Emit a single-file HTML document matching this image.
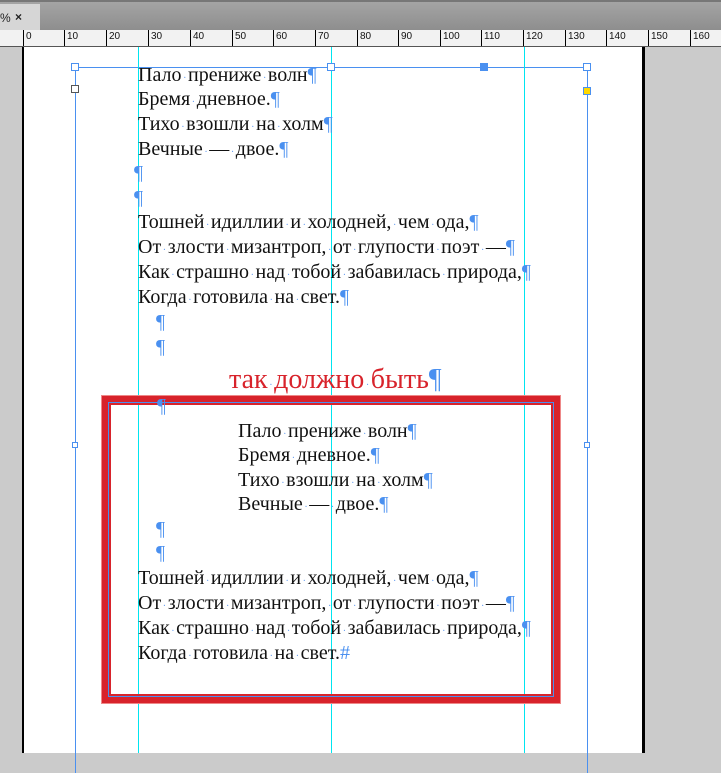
<!DOCTYPE html>
<html><head><meta charset="utf-8"><style>
html,body{margin:0;padding:0}
body{width:721px;height:753px;position:relative;overflow:hidden;background:#cbcbcb;font-family:"Liberation Serif","Noto Serif CJK SC",serif}
.top{position:absolute;left:0;top:0;width:721px;height:30px;background:linear-gradient(#a4a4a4,#8e8e8e);border-top:2px solid #777;box-sizing:border-box}
.tab{position:absolute;left:0;top:2px;width:40px;height:28px;background:#d6d6d6;font:12px "Liberation Sans",sans-serif;color:#222}
.ruler{position:absolute;left:0;top:30px;width:721px;height:16px;background:#f2f2f2;border-bottom:1px solid #555;font:10px "Liberation Sans",sans-serif;color:#111}
.ruler .t{position:absolute;top:0;height:16px;border-left:1px solid #000}
.ruler .t span{position:absolute;left:2px;top:1px}
.page{position:absolute;left:22px;top:47px;width:618px;height:706px;background:#fff;border-left:2px solid #000;border-right:3px solid #000}
.v{position:absolute;top:47px;width:1px;height:706px}
.l{position:absolute;font-size:20px;line-height:20px;color:#111;white-space:nowrap}
.p{color:#4a90f0}
i{font-style:normal;display:inline-block;width:6.5px;text-align:center;color:#6aa0f0;font-size:10px}
.h{position:absolute;width:6px;height:6px;border:1px solid #4a90f0;background:#fff}
</style></head><body>
<div class="top"><div class="tab"><span style="position:absolute;left:0;top:7px">%</span><span style="position:absolute;left:15px;top:6px;font-weight:bold">×</span></div></div>
<div class="ruler">
<div class="t" style="left:23px"><span>0</span></div><div class="t" style="left:64px"><span>10</span></div><div class="t" style="left:106px"><span>20</span></div><div class="t" style="left:148px"><span>30</span></div><div class="t" style="left:190px"><span>40</span></div><div class="t" style="left:232px"><span>50</span></div><div class="t" style="left:273px"><span>60</span></div><div class="t" style="left:315px"><span>70</span></div><div class="t" style="left:357px"><span>80</span></div><div class="t" style="left:398px"><span>90</span></div><div class="t" style="left:440px"><span>100</span></div><div class="t" style="left:481px"><span>110</span></div><div class="t" style="left:523px"><span>120</span></div><div class="t" style="left:565px"><span>130</span></div><div class="t" style="left:606px"><span>140</span></div><div class="t" style="left:648px"><span>150</span></div><div class="t" style="left:690px"><span>160</span></div>
</div>
<div class="page"></div>
<div style="position:absolute;left:75px;top:67px;width:512px;height:1px;background:#4a90f0"></div>
<div class="v" style="left:75px;top:67px;background:#4a90f0"></div>
<div class="v" style="left:587px;top:67px;background:#4a90f0"></div>
<div class="v" style="left:138px;background:#00e5f0"></div>
<div class="v" style="left:331px;background:#00e5f0"></div>
<div class="v" style="left:524px;background:#00e5f0"></div>
<div class="h" style="left:71px;top:63px"></div>
<div class="h" style="left:327px;top:63px"></div>
<div class="h" style="left:583px;top:63px"></div>
<div class="h" style="left:480px;top:63px;background:#4a90f0"></div>
<div class="h" style="left:71px;top:85px;border-color:#555"></div>
<div class="h" style="left:583px;top:87px;background:#ffd800"></div>
<div class="h" style="left:72px;top:442px;width:4px;height:4px"></div>
<div class="h" style="left:584px;top:442px;width:4px;height:4px"></div>
<div style="position:absolute;left:102px;top:396px;width:458px;height:307px;box-sizing:border-box;border:6px solid #d8232b;box-shadow:0 0 0 1px #e88"></div>
<div style="position:absolute;left:108px;top:402px;width:446px;height:295px;box-sizing:border-box;border:1px solid #4a90f0"></div>
<div style="position:absolute;left:109px;top:403px;width:444px;height:293px;box-sizing:border-box;border:2px solid #d8232b"></div>

<div class="l" style="left:138px;top:65px">Пало<i>·</i>прениже<i>·</i>волн<span class="p">¶</span></div>
<div class="l" style="left:138px;top:89px">Бремя<i>·</i>дневное.<span class="p">¶</span></div>
<div class="l" style="left:138px;top:114px">Тихо<i>·</i>взошли<i>·</i>на<i>·</i>холм<span class="p">¶</span></div>
<div class="l" style="left:138px;top:139px">Вечные<i>·</i>—<i>·</i>двое.<span class="p">¶</span></div>
<div class="l p" style="left:134px;top:163px">¶</div>
<div class="l p" style="left:134px;top:188px">¶</div>
<div class="l" style="left:138px;top:212px">Тошней<i>·</i>идиллии<i>·</i>и<i>·</i>холодней,<i>·</i>чем<i>·</i>ода,<span class="p">¶</span></div>
<div class="l" style="left:138px;top:237px">От<i>·</i>злости<i>·</i>мизантроп,<i>·</i>от<i>·</i>глупости<i>·</i>поэт<i>·</i>—<span class="p">¶</span></div>
<div class="l" style="left:138px;top:262px">Как<i>·</i>страшно<i>·</i>над<i>·</i>тобой<i>·</i>забавилась<i>·</i>природа,<span class="p">¶</span></div>
<div class="l" style="left:138px;top:287px">Когда<i>·</i>готовила<i>·</i>на<i>·</i>свет.<span class="p">¶</span></div>
<div class="l p" style="left:156px;top:312px">¶</div>
<div class="l p" style="left:156px;top:337px">¶</div>
<div class="l" style="left:229px;top:366px;font-size:28px;line-height:28px;color:#d8232b">так<i>·</i>должно<i>·</i>быть<span class="p">¶</span></div>
<div class="l p" style="left:157px;top:396px">¶</div>
<div class="l" style="left:238px;top:421px">Пало<i>·</i>прениже<i>·</i>волн<span class="p">¶</span></div>
<div class="l" style="left:238px;top:445px">Бремя<i>·</i>дневное.<span class="p">¶</span></div>
<div class="l" style="left:238px;top:470px">Тихо<i>·</i>взошли<i>·</i>на<i>·</i>холм<span class="p">¶</span></div>
<div class="l" style="left:238px;top:494px">Вечные<i>·</i>—<i>·</i>двое.<span class="p">¶</span></div>
<div class="l p" style="left:156px;top:519px">¶</div>
<div class="l p" style="left:156px;top:543px">¶</div>
<div class="l" style="left:138px;top:568px">Тошней<i>·</i>идиллии<i>·</i>и<i>·</i>холодней,<i>·</i>чем<i>·</i>ода,<span class="p">¶</span></div>
<div class="l" style="left:138px;top:593px">От<i>·</i>злости<i>·</i>мизантроп,<i>·</i>от<i>·</i>глупости<i>·</i>поэт<i>·</i>—<span class="p">¶</span></div>
<div class="l" style="left:138px;top:618px">Как<i>·</i>страшно<i>·</i>над<i>·</i>тобой<i>·</i>забавилась<i>·</i>природа,<span class="p">¶</span></div>
<div class="l" style="left:138px;top:643px">Когда<i>·</i>готовила<i>·</i>на<i>·</i>свет.<span class="p">#</span></div>
</body></html>
